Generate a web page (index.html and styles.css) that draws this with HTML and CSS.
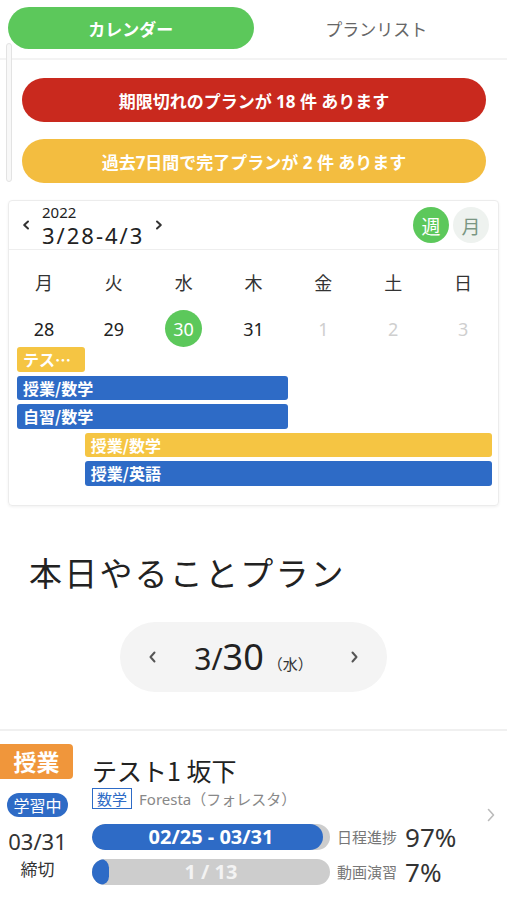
FILE: index.html
```html
<!DOCTYPE html>
<html lang="ja">
<head>
<meta charset="utf-8">
<title>カレンダー</title>
<link rel="stylesheet" href="styles.css">
</head>
<body>
<div class="page">
  <div class="scroll-ind"></div>
  <nav class="tabs">
    <div class="tab active">カレンダー</div>
    <div class="tab">プランリスト</div>
  </nav>

  <div class="alerts">
    <div class="alert red">期限切れのプランが 18 件 あります</div>
    <div class="alert yellow">過去7日間で完了プランが 2 件 あります</div>
  </div>

  <section class="cal">
    <div class="cal-head">
      <svg class="chev-s" width="8" height="10" viewBox="0 0 8 10"><path d="M6 1.5 L2.2 5 L6 8.5" fill="none" stroke="#333" stroke-width="2" stroke-linecap="round" stroke-linejoin="round"/></svg>
      <div class="range">
        <div class="year">2022</div>
        <div class="span">3/28-4/3</div>
      </div>
      <svg class="chev-s chev-r" width="8" height="10" viewBox="0 0 8 10"><path d="M2 1.5 L5.8 5 L2 8.5" fill="none" stroke="#333" stroke-width="2" stroke-linecap="round" stroke-linejoin="round"/></svg>
      <div class="views">
        <span class="view on">週</span>
        <span class="view">月</span>
      </div>
    </div>

    <div class="dow">
      <span>月</span><span>火</span><span>水</span><span>木</span><span>金</span><span>土</span><span>日</span>
    </div>
    <div class="dates">
      <span>28</span><span>29</span><span><b class="today">30</b></span><span>31</span><span class="off">1</span><span class="off">2</span><span class="off">3</span>
    </div>

    <div class="events">
      <div class="ev yellow c1-1">テス…</div>
      <div class="ev blue c1-4">授業/数学</div>
      <div class="ev blue c1-4">自習/数学</div>
      <div class="ev yellow c2-7">授業/数学</div>
      <div class="ev blue c2-7">授業/英語</div>
    </div>
  </section>

  <h2 class="today-title">本日やることプラン</h2>

  <div class="day-nav">
    <svg width="9" height="14" viewBox="0 0 9 14"><path d="M6.5 2.5 L2.5 7 L6.5 11.5" fill="none" stroke="#555" stroke-width="2" stroke-linecap="round" stroke-linejoin="round"/></svg>
    <div class="day"><span class="m">3/</span><span class="d">30</span><span class="w">（水）</span></div>
    <svg width="9" height="14" viewBox="0 0 9 14"><path d="M2.5 2.5 L6.5 7 L2.5 11.5" fill="none" stroke="#555" stroke-width="2" stroke-linecap="round" stroke-linejoin="round"/></svg>
  </div>

  <div class="plan">
    <div class="plan-left">
      <div class="kind">授業</div>
      <div class="status">学習中</div>
      <div class="due">03/31</div>
      <div class="due-l">締切</div>
    </div>
    <div class="plan-main">
      <div class="plan-title">テスト1 坂下</div>
      <div class="meta">
        <span class="subj">数学</span>
        <span class="src">Foresta（フォレスタ）</span>
      </div>
      <div class="prog">
        <div class="prow">
          <div class="bar"><div class="fill" style="width:97%"></div><div class="bar-t">02/25 - 03/31</div></div>
          <span class="pl">日程進捗</span><span class="pv">97%</span>
        </div>
        <div class="prow">
          <div class="bar"><div class="fill" style="width:7%"></div><div class="bar-t dim">1 / 13</div></div>
          <span class="pl">動画演習</span><span class="pv">7%</span>
        </div>
      </div>
    </div>
    <svg class="chev-plan" width="10" height="16" viewBox="0 0 10 16"><path d="M2.5 2.5 L7.5 8 L2.5 13.5" fill="none" stroke="#bbb" stroke-width="1.6" stroke-linecap="round" stroke-linejoin="round"/></svg>
  </div>
</div>
</body>
</html>
```

FILE: styles.css
```css
* { box-sizing: border-box; }
body {
  margin: 0;
  background: #fff;
  color: #222;
  font-family: "Noto Sans", "Noto Sans CJK JP", sans-serif;
}
.page { position: relative; width: 507px; overflow: hidden; }

.scroll-ind {
  position: absolute;
  left: 6px;
  top: 43px;
  width: 6px;
  height: 139px;
  border: 1px solid #e3e3e3;
  border-radius: 3px;
  background: #f8f8f8;
}

.tabs {
  display: flex;
  height: 60px;
  padding: 7px 8px 0;
  border-bottom: 2px solid #f3f3f3;
}
.tab {
  flex: 1;
  height: 42px;
  border-radius: 21px;
  display: flex;
  align-items: center;
  justify-content: center;
  font-family: "Noto Sans CJK JP", sans-serif;
  font-size: 17px;
  color: #666;
}
.tab.active { background: #5cc85b; color: #fff; font-weight: 700; }

.alerts {
  display: flex;
  flex-direction: column;
  gap: 17px;
  padding: 18px 21px 0 22px;
}
.alert {
  height: 44px;
  border-radius: 22px;
  display: flex;
  align-items: center;
  justify-content: center;
  color: #fff;
  font-weight: 700;
  font-size: 17px;
}
.alert.red { background: #c9291e; }
.alert.yellow { background: #f3bd40; }

.cal {
  margin: 17px 8px 0;
  border: 1px solid #ececec;
  border-radius: 4px;
  box-shadow: 0 1px 3px rgba(0,0,0,0.06);
  padding-bottom: 19px;
}
.cal-head {
  height: 49px;
  display: flex;
  align-items: center;
  padding: 0 9px 0 13px;
  border-bottom: 1px solid #eee;
}
.range { margin-left: 12px; }
.year { font-size: 15px; line-height: 20px; color: #222; }
.span { font-size: 22px; line-height: 26px; letter-spacing: 2px; color: #222; }
.chev-r { margin-left: 11px; }
.views { margin-left: auto; display: flex; gap: 4px; }
.view {
  width: 36px;
  height: 36px;
  border-radius: 50%;
  display: flex;
  align-items: center;
  justify-content: center;
  font-family: "Noto Sans CJK JP", sans-serif;
  font-size: 19px;
  background: #eef2ef;
  color: #7a9683;
}
.view.on { background: #5cc85b; color: #fff; }

.dow, .dates {
  display: grid;
  grid-template-columns: repeat(7, 1fr);
  text-align: center;
}
.dow {
  padding-top: 20px;
  font-family: "Noto Sans CJK JP", sans-serif;
  font-size: 18px;
  line-height: 24px;
  color: #333;
}
.dates {
  margin-top: 16px;
  height: 36px;
  font-size: 18px;
  color: #222;
}
.dates span { display: flex; align-items: center; justify-content: center; }
.dates .off { color: #cfcfcf; }
.today {
  width: 37px;
  height: 37px;
  border-radius: 50%;
  background: #5cc85b;
  color: #fff;
  font-weight: 400;
  display: flex;
  align-items: center;
  justify-content: center;
}

.events {
  display: grid;
  grid-template-columns: repeat(7, 1fr);
  grid-auto-rows: 24.5px;
  row-gap: 4px;
  padding: 1px 6px 0 8px;
}
.ev {
  border-radius: 3px;
  color: #fff;
  font-family: "Noto Sans CJK JP", sans-serif;
  font-weight: 700;
  font-size: 16px;
  line-height: 24px;
  padding-left: 6px;
  white-space: nowrap;
  overflow: hidden;
}
.ev.blue { background: #2e6bc6; }
.ev.yellow { background: #f5c543; }
.c1-1 { grid-column: 1 / 2; }
.c1-4 { grid-column: 1 / 5; }
.c2-7 { grid-column: 2 / 8; }

.today-title {
  margin: 46px 0 0;
  padding-left: 29px;
  font-family: "Noto Sans CJK JP", sans-serif;
  font-size: 33px;
  font-weight: 400;
  line-height: 40px;
  letter-spacing: 2.2px;
  color: #222;
}

.day-nav {
  margin: 30px auto 0;
  width: 267px;
  height: 70px;
  border-radius: 35px;
  background: #f4f4f4;
  display: flex;
  align-items: center;
  justify-content: space-between;
  padding: 0 28px;
}
.day { display: flex; align-items: baseline; line-height: 1; color: #222; }
.day .m { font-size: 30px; }
.day .d { font-size: 36px; }
.day .w { font-family: "Noto Sans CJK JP", sans-serif; font-size: 15px; margin-left: 4px; color: #333; }

.plan {
  margin-top: 37px;
  border-top: 2px solid #f0f0f0;
  border-bottom: 2px solid #f0f0f0;
  display: flex;
  padding: 13px 0 17px;
}
.plan-left {
  width: 75px;
  display: flex;
  flex-direction: column;
  align-items: center;
}
.kind {
  align-self: flex-start;
  width: 73px;
  height: 35px;
  border-radius: 0 4px 4px 0;
  background: #f0963b;
  color: #fff;
  font-family: "Noto Sans CJK JP", sans-serif;
  font-weight: 700;
  font-size: 23px;
  display: flex;
  align-items: center;
  justify-content: center;
}
.status {
  margin-top: 14px;
  width: 61px;
  height: 24px;
  border-radius: 12px;
  background: #2e6bc6;
  color: #fff;
  font-family: "Noto Sans CJK JP", sans-serif;
  font-size: 16px;
  display: flex;
  align-items: center;
  justify-content: center;
}
.due { margin-top: 9px; font-size: 22px; line-height: 30px; color: #333; }
.due-l { font-family: "Noto Sans CJK JP", sans-serif; font-size: 17px; line-height: 25px; color: #333; }

.plan-main { margin-left: 17px; margin-top: 10px; }
.plan-title {
  font-family: "Noto Sans CJK JP", sans-serif;
  font-size: 25px;
  line-height: 32px;
  color: #222;
}
.meta { margin-top: 2px; display: flex; align-items: center; gap: 7px; height: 21px; }
.subj {
  border: 1px solid #2e6bc6;
  color: #2e6bc6;
  font-family: "Noto Sans CJK JP", sans-serif;
  font-size: 15px;
  line-height: 19px;
  padding: 0 4px;
}
.src { color: #888; font-size: 15px; }
.prog { margin-top: 13px; display: flex; flex-direction: column; gap: 5px; }
.prow { display: flex; align-items: center; }
.bar {
  position: relative;
  width: 238px;
  height: 26px;
  border-radius: 13px;
  background: #cdcdcd;
  overflow: hidden;
  flex: none;
}
.fill { position: absolute; left: 0; top: 0; bottom: 0; background: #2e6bc6; border-radius: 13px; }
.bar-t {
  position: relative;
  text-align: center;
  line-height: 26px;
  font-weight: 700;
  font-size: 20px;
  color: #fff;
}
.bar-t.dim { color: #f3f3f3; }
.pl { margin-left: 7px; font-family: "Noto Sans CJK JP", sans-serif; font-size: 15px; color: #777; }
.pv { margin-left: 8px; font-size: 26px; line-height: 30px; color: #333; }
.chev-plan { margin-left: auto; margin-right: 11px; align-self: center; }
```
